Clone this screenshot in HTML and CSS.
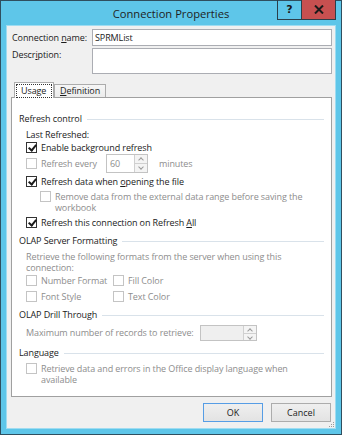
FILE: index.html
```html
<!DOCTYPE html>
<html lang="en">
<head>
  <meta charset="UTF-8">
  <title>Connection Properties</title>
  <link rel="stylesheet" href="styles.css">
</head>
<body>
  <div class="window">
    <!-- Title bar -->
    <div class="titlebar">
      <div class="title">Connection Properties</div>
      <div class="caption-buttons">
        <div class="cap-btn help">?</div>
        <div class="cap-btn close">
          <svg width="10" height="9" viewBox="0 0 10 9"><path d="M1 0.5 L9 8.5 M9 0.5 L1 8.5" stroke="#1a1a1a" stroke-width="2"/></svg>
        </div>
      </div>
    </div>

    <div class="client">
      <div class="field-row">
        <label class="field-label">Connection <u>n</u>ame:</label>
        <div class="textbox">SPRMList</div>
      </div>
      <div class="field-row">
        <label class="field-label top">Descr<u>i</u>ption:</label>
        <div class="textbox tall"></div>
      </div>

      <!-- Tabs -->
      <div class="tabs">
        <div class="tab active"><span class="focus-ring">Usage</span></div>
        <div class="tab"><u>D</u>efinition</div>
      </div>

      <div class="tab-panel">
        <div class="group-title first"><span>Refresh control</span></div>
        <div class="row indent after-title">Last Refreshed:</div>
        <div class="row indent check-row sp1">
          <span class="check checked"></span><span>Enable back<u>g</u>round refresh</span>
        </div>
        <div class="row indent check-row spin-row disabled">
          <span class="check"></span><span class="every">Refresh every</span>
          <div class="spinner small">
            <div class="spin-value">60</div>
            <div class="spin-buttons"><span class="up"></span><span class="down"></span></div>
          </div>
          <span>minutes</span>
        </div>
        <div class="row indent check-row sp3">
          <span class="check checked"></span><span>Refresh data when <u>o</u>pening the file</span>
        </div>
        <div class="row indent2 check-row multi sp3 disabled">
          <span class="check"></span><span class="wrap">Remove data from the external data range before saving the workbook</span>
        </div>
        <div class="row indent check-row sp4">
          <span class="check checked"></span><span>Refresh this connection on Refresh <u>A</u>ll</span>
        </div>

        <div class="group-title"><span>OLAP Server Formatting</span></div>
        <div class="row indent multi after-title disabled">Retrieve the following formats from the server when using this connection:</div>
        <div class="format-grid disabled">
          <div class="check-row"><span class="check"></span><span>Number Format</span></div>
          <div class="check-row"><span class="check"></span><span>Fill Color</span></div>
          <div class="check-row"><span class="check"></span><span>Font Style</span></div>
          <div class="check-row"><span class="check"></span><span>Text Color</span></div>
        </div>

        <div class="group-title"><span>OLAP Drill Through</span></div>
        <div class="row indent drill-row after-title disabled">
          <span>Maximum number of records to retrieve:</span>
          <div class="spinner wide">
            <div class="spin-value"></div>
            <div class="spin-buttons"><span class="up"></span><span class="down"></span></div>
          </div>
        </div>

        <div class="group-title"><span>Language</span></div>
        <div class="row indent check-row multi after-title disabled">
          <span class="check"></span><span class="wrap">Retrieve data and errors in the Office display language when available</span>
        </div>
      </div>

      <div class="dialog-buttons">
        <button class="btn default">OK</button>
        <button class="btn">Cancel</button>
      </div>
      <svg class="grip" width="7" height="7" viewBox="0 0 7 7">
        <rect x="5" y="1" width="1" height="1" fill="#9a9a9a"/>
        <rect x="3" y="3" width="1" height="1" fill="#9a9a9a"/>
        <rect x="5" y="3" width="1" height="1" fill="#9a9a9a"/>
        <rect x="1" y="5" width="1" height="1" fill="#9a9a9a"/>
        <rect x="3" y="5" width="1" height="1" fill="#9a9a9a"/>
        <rect x="5" y="5" width="1" height="1" fill="#9a9a9a"/>
      </svg>
    </div>
  </div>
</body>
</html>
```

FILE: styles.css
```css
* {
  margin: 0;
  padding: 0;
  box-sizing: border-box;
}

:root {
  --frame: #5ec6e9;
  --frame-edge: #2f4f5f;
  --face: #f0f0f0;
  --text: #1b1b1b;
  --disabled: #8d8d8d;
  --box-border: #abadb3;
  --rule: #d9e2ea;
}

body {
  background: #ffffff;
  font-family: "Open Sans", "Noto Sans", sans-serif;
  font-size: 9px;
  letter-spacing: -0.1px;
  color: var(--text);
}

u {
  text-decoration: underline;
  text-underline-offset: 1px;
}

/* Window frame */
.window {
  width: 342px;
  height: 435px;
  border: 1px solid var(--frame-edge);
  background: var(--frame);
  padding: 0 5px 5px 5px;
  display: flex;
  flex-direction: column;
}

.titlebar {
  height: 24px;
  position: relative;
  display: flex;
  align-items: center;
  justify-content: center;
}

.title {
  font-size: 11.2px;
  letter-spacing: 0;
  color: #1e1e1e;
  padding-top: 1px;
}

.caption-buttons {
  position: absolute;
  top: -1px;
  right: 0;
  display: flex;
}

.cap-btn {
  height: 20px;
  border: 1px solid #2b3f4a;
  border-top: none;
  display: flex;
  align-items: center;
  justify-content: center;
}

.help {
  width: 24px;
  border-right: none;
  font-family: "DejaVu Sans", sans-serif;
  font-weight: bold;
  font-size: 11px;
  color: #1a1a1a;
}

.close {
  width: 35px;
  background: #c75050;
}

/* Client area */
.client {
  flex: 1;
  background: var(--face);
  border: 1px solid #9fdcf1;
  padding: 3px 3px 0 4px;
  position: relative;
}

.field-row {
  display: flex;
  margin-bottom: 2px;
  padding-left: 1px;
}

.field-label {
  width: 80px;
  line-height: 17px;
  white-space: nowrap;
}

.field-label.top {
  line-height: 12px;
  padding-top: 1px;
}

.textbox {
  flex: 1;
  height: 17px;
  background: #fff;
  border: 1px solid var(--box-border);
  padding: 0 2px;
  line-height: 15px;
}

.textbox.tall {
  height: 26px;
}

/* Tabs */
.tabs {
  display: flex;
  align-items: flex-end;
  margin-top: 8px;
  padding-left: 3px;
  position: relative;
  z-index: 1;
}

.tab {
  height: 13px;
  border: 1px solid #acacac;
  border-bottom: none;
  background: linear-gradient(#f6f6f6, #ececec);
  padding: 0 5px 0 5px;
  line-height: 12px;
}

.tab.active {
  height: 16px;
  width: 40px;
  background: #fff;
  margin-bottom: -1px;
  padding: 1px 1px 0 1px;
}

.focus-ring {
  display: block;
  border: 1px dotted #333;
  line-height: 12px;
  height: 14px;
  padding-left: 4px;
}

.tab-panel {
  height: 300px;
  width: 321px;
  background: #fff;
  border: 1px solid #a0a0a0;
  padding: 15px 7px 0 7px;
}

.group-title {
  display: flex;
  align-items: center;
  gap: 5px;
  line-height: 12px;
  margin-top: 6px;
  white-space: nowrap;
}

.group-title.first {
  margin-top: 0;
}

.group-title::after {
  content: '';
  flex: 1;
  height: 1px;
  background: var(--rule);
}

.row {
  line-height: 12px;
}

.row.multi,
.row.multi .wrap {
  line-height: 11px;
}

.indent {
  margin-left: 7px;
}

.indent2 {
  margin-left: 21px;
}

.after-title { margin-top: 4px; }
.sp1 { margin-top: 1px; }
.sp3 { margin-top: 3px; }
.sp4 { margin-top: 4px; }

.disabled {
  color: var(--disabled);
}

.check-row {
  display: flex;
  align-items: flex-start;
  gap: 4px;
}

.check {
  flex: none;
  width: 11px;
  height: 11px;
  border: 1px solid #333;
  background: #fff;
  position: relative;
}

.disabled .check {
  border-color: #c4c4c4;
}

.check.checked::after {
  content: '';
  position: absolute;
  left: 3px;
  top: 0px;
  width: 3px;
  height: 6px;
  border: solid #1a1a1a;
  border-width: 0 2px 2px 0;
  transform: rotate(40deg);
}

/* Spinners */
.spin-row {
  height: 19px;
  align-items: center;
}

.every {
  width: 61px;
}

.spinner {
  display: flex;
  height: 19px;
  border: 1px solid #c3c3c3;
  background: #fff;
}

.spinner.small {
  width: 42px;
  margin-right: 7px;
}

.spinner.wide {
  width: 57px;
  height: 16px;
  margin-left: 6px;
}

.spin-value {
  flex: 1;
  line-height: 17px;
  padding-left: 3px;
}

.spinner.wide .spin-value {
  background: #efefef;
}

.spin-buttons {
  width: 13px;
  display: flex;
  flex-direction: column;
  border-left: 1px solid #d0d0d0;
}

.spin-buttons span {
  flex: 1;
  position: relative;
  background: #f4f4f4;
}

.spin-buttons .up {
  border-bottom: 1px solid #d0d0d0;
}

.spin-buttons span::after {
  content: '';
  position: absolute;
  left: 4px;
  width: 3px;
  height: 3px;
  border: solid #9a9a9a;
  border-width: 1px 0 0 1px;
}

.spin-buttons .up::after {
  top: 3px;
  transform: rotate(45deg);
}

.spin-buttons .down::after {
  top: 1px;
  transform: rotate(225deg);
}

.drill-row {
  display: flex;
  align-items: center;
  height: 16px;
}

/* OLAP format checkboxes */
.format-grid {
  display: grid;
  grid-template-columns: 87px auto;
  row-gap: 4px;
  margin-left: 7px;
  margin-top: 2px;
  line-height: 12px;
}

/* Dialog buttons */
.dialog-buttons {
  display: flex;
  justify-content: flex-end;
  gap: 8px;
  margin-top: 6px;
  padding-right: 1px;
}

.btn {
  width: 60px;
  height: 19px;
  font-family: inherit;
  font-size: 9px;
  color: #1b1b1b;
  background: linear-gradient(#efefef, #e3e3e3);
  border: 1px solid #acacac;
}

.btn.default {
  border-color: #569de5;
}

.grip {
  position: absolute;
  right: 0;
  bottom: 0;
}
```
